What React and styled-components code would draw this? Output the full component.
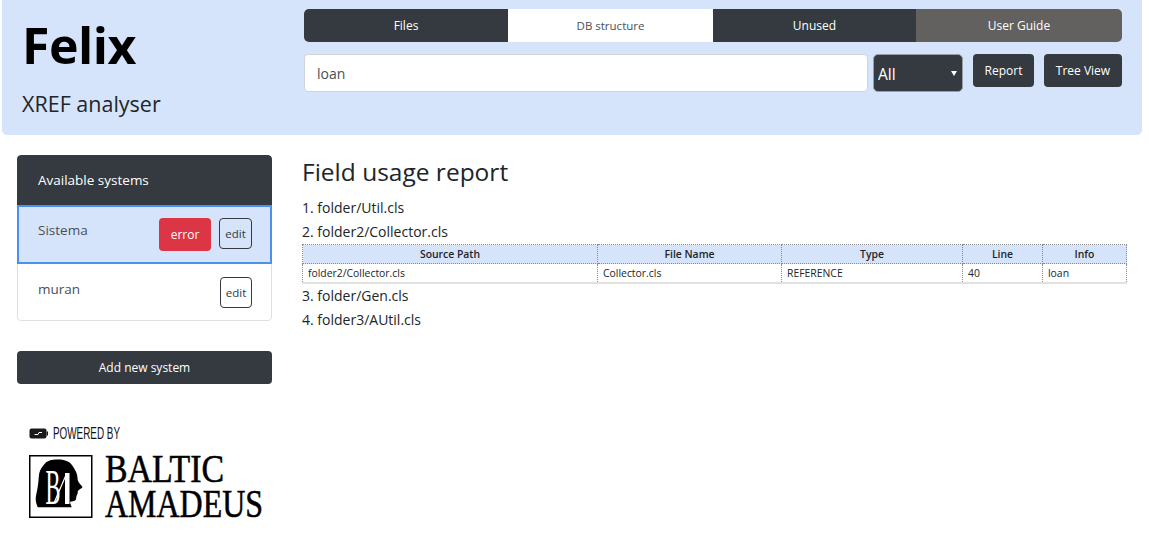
import React from 'react';
import styled, { createGlobalStyle } from 'styled-components';

const GlobalStyle = createGlobalStyle`
    html, body {
        margin: 0;
        background: #fff;
        font-family: "Open Sans", "Noto Sans", sans-serif;
        color: #212529;
    }
    * {
        box-sizing: border-box;
    }
`;

const Header = styled.header`
    display: flex;
    height: 135px;
    margin: 0 7px 0 2px;
    background: #d6e4fb;
    border-radius: 0 0 5px 5px;
`;
const Brand = styled.div`
    width: 302px;
    padding: 14px 0 0 20px;
    h1 {
        margin: 0;
        font-size: 50px;
        line-height: 62px;
        font-weight: 700;
        letter-spacing: -0.5px;
        color: #000;
    }
    p {
        margin: 14px 0 0;
        font-size: 21.5px;
        line-height: 28px;
    }
`;
const Controls = styled.div`
    width: 818px;
    padding-top: 9px;
`;
const Tabs = styled.nav`
    display: flex;
    height: 33px;
    border-radius: 5px;
    overflow: hidden;
`;
const Tab = styled.a`
    width: ${p => p.$width}px;
    display: flex;
    align-items: center;
    justify-content: center;
    font-size: 12px;
    font-weight: 500;
    color: #fff;
    background: #343a40;
    ${p => p.$active && `
        background: #fff;
        color: #495057;
        font-weight: 400;
        font-size: 11.5px;
    `}
    ${p => p.$guide && `
        background: #636060;
    `}
`;
const SearchRow = styled.div`
    display: flex;
    align-items: flex-start;
    margin-top: 12px;
`;
const SearchInput = styled.input`
    width: 564px;
    height: 38px;
    padding: 0 12px;
    border: 1px solid #ced4da;
    border-radius: 4px;
    background: #fff;
    font: 14px "Open Sans", sans-serif;
    color: #495057;
    outline: none;
`;
const SelectWrap = styled.div`
    position: relative;
    width: 90px;
    height: 38px;
    margin: 0 10px 0 5px;
    &::after {
        content: '';
        position: absolute;
        top: 17px;
        right: 6px;
        border-left: 3px solid transparent;
        border-right: 3px solid transparent;
        border-top: 5px solid #fff;
    }
`;
const KindSelect = styled.select`
    appearance: none;
    width: 100%;
    height: 100%;
    padding: 2px 0 0 4px;
    border: 1px solid #9a9ea3;
    border-radius: 5px;
    background: #343a40;
    color: #fff;
    font: 15.5px "Open Sans", sans-serif;
    outline: none;
`;
const DarkButton = styled.button`
    height: 33px;
    width: ${p => p.$width || 'auto'};
    margin-right: ${p => p.$gap || 0}px;
    padding: 0;
    border: none;
    border-radius: 4px;
    background: #343a40;
    color: #fff;
    font: 500 12px "Open Sans", sans-serif;
`;

const Page = styled.div`
    display: flex;
    padding: 20px 0 0 17px;
`;
const Sidebar = styled.aside`
    width: 255px;
    margin-right: 30px;
`;
const SystemList = styled.div`
    border-radius: 4px;
    overflow: hidden;
    margin-bottom: 30px;
`;
const SystemsHeader = styled.div`
    height: 50px;
    padding-left: 21px;
    display: flex;
    align-items: center;
    background: #343a40;
    color: #fff;
    font-size: 13.5px;
    font-weight: 500;
    border-radius: 4px 4px 0 0;
`;
const SystemRow = styled.div`
    display: flex;
    align-items: flex-start;
    justify-content: flex-end;
    height: ${p => (p.$selected ? 59 : 57)}px;
    padding: ${p => (p.$selected ? '11px 18px 0 19px' : '13px 19px 0 20px')};
    border: ${p => (p.$selected ? '2px solid #4a90f0' : '1px solid #dfdfdf')};
    ${p => !p.$selected && 'border-top: none; border-radius: 0 0 4px 4px;'}
    background: ${p => (p.$selected ? '#d6e4fb' : '#fff')};
`;
const SystemName = styled.span`
    margin-right: auto;
    padding-top: 1px;
    font-size: 13.5px;
    line-height: 22px;
    color: #495057;
`;
const ErrorBadge = styled.span`
    width: 52px;
    height: 33px;
    margin-right: 8px;
    display: flex;
    align-items: center;
    justify-content: center;
    border-radius: 4px;
    background: #dc3545;
    color: #fff;
    font-size: 12px;
`;
const EditButton = styled.button`
    width: ${p => p.$width}px;
    height: 31px;
    padding: 0;
    border: 1px solid #343a40;
    border-radius: 4px;
    background: transparent;
    color: #343a40;
    font: 11.5px "Open Sans", sans-serif;
`;
const PoweredBy = styled.div`
    margin: 41px 0 0 12px;
    svg {
        display: block;
    }
`;

const Report = styled.main`
    width: 825px;
    padding-top: 1px;
    h2 {
        margin: 0 0 8px;
        font-size: 24.5px;
        line-height: 32px;
        font-weight: 400;
    }
`;
const FileLine = styled.div`
    height: 24px;
    font-size: 14px;
    line-height: 24px;
`;
const UsageTable = styled.table`
    width: 824px;
    table-layout: fixed;
    border-collapse: collapse;
    font-size: 10.4px;
    border-bottom: 2px solid #e2e2e2;
    th, td {
        height: 19px;
        padding: 0 5px;
        border: 1px dotted #8a8a8a;
    }
    tbody td {
        border-bottom: none;
    }
    th {
        background: #d6e4fb;
        font-weight: 600;
        color: #212529;
        text-align: center;
    }
`;

const columns = [
    { name: 'Source Path', width: 295 },
    { name: 'File Name', width: 184 },
    { name: 'Type', width: 181 },
    { name: 'Line', width: 80 },
    { name: 'Info', width: 84 },
];

const Logo = () => (
    <svg width="240" height="94" viewBox="0 0 240 94">
        <rect x="0.5" y="3.5" width="17" height="10" rx="2" fill="#1a1a1a" />
        <rect x="17.5" y="6.5" width="1.5" height="4" fill="#1a1a1a" />
        <path d="M5.5 9.5h3.5l1-2h3" stroke="#fff" strokeWidth="1" fill="none" />
        <text x="24" y="14" fontFamily="Liberation Sans, sans-serif" fontSize="17" textLength="67" lengthAdjust="spacingAndGlyphs" fill="#111">POWERED BY</text>
        <rect x="0.75" y="30.75" width="62" height="61.5" fill="#fff" stroke="#000" strokeWidth="1.5" />
        <path d="M29 34.5 C22 34.5 18 36 16 38.5 C12 43 10.5 46 10 50 C9.5 54 9.5 58 8.7 62 C8 67 6.5 71 6.7 75 C7 78 8 80.5 8.7 82.3 L42.7 82.3 C42 80 41 78.5 41 76.7 C43 76.5 45.5 76.5 46.7 75 C47.5 73 47 71 48.7 68.3 C48.5 66.5 49 65.5 50.5 64.5 C52 63.5 54 62.5 53.3 61.7 C52 60 49.5 58 48.7 55 C48.5 51 48 48 46 45 C44 41 42 38 39.3 36.7 C36 35 33 34.5 29 34.5 Z" fill="#000" />
        <text x="16.5" y="79" fontFamily="Liberation Serif, serif" fontSize="50" textLength="15" lengthAdjust="spacingAndGlyphs" fill="#fff">B</text>
        <path d="M25 78 L37 50" stroke="#fff" strokeWidth="1.2" fill="none" />
        <rect x="36" y="48" width="4.5" height="31" fill="#fff" />
        <text x="76" y="57" fontFamily="Liberation Serif, serif" fontSize="41" textLength="119" lengthAdjust="spacingAndGlyphs" fill="#000" stroke="#000" strokeWidth="0.6">BALTIC</text>
        <text x="76" y="92" fontFamily="Liberation Serif, serif" fontSize="41" textLength="158" lengthAdjust="spacingAndGlyphs" fill="#000" stroke="#000" strokeWidth="0.6">AMADEUS</text>
    </svg>
);

const App = () => {
    return (
        <>
            <GlobalStyle />
            <Header>
                <Brand>
                    <h1>Felix</h1>
                    <p>XREF analyser</p>
                </Brand>
                <Controls>
                    <Tabs>
                        <Tab $width={204}>Files</Tab>
                        <Tab $width={205} $active>DB structure</Tab>
                        <Tab $width={203}>Unused</Tab>
                        <Tab $width={206} $guide>User Guide</Tab>
                    </Tabs>
                    <SearchRow>
                        <SearchInput defaultValue="loan" />
                        <SelectWrap>
                            <KindSelect defaultValue="All">
                                <option>All</option>
                            </KindSelect>
                        </SelectWrap>
                        <DarkButton $width="61px" $gap={10}>Report</DarkButton>
                        <DarkButton $width="78px">Tree View</DarkButton>
                    </SearchRow>
                </Controls>
            </Header>
            <Page>
                <Sidebar>
                    <SystemList>
                        <SystemsHeader>Available systems</SystemsHeader>
                        <SystemRow $selected>
                            <SystemName>Sistema</SystemName>
                            <ErrorBadge>error</ErrorBadge>
                            <EditButton $width={33}>edit</EditButton>
                        </SystemRow>
                        <SystemRow>
                            <SystemName>muran</SystemName>
                            <EditButton $width={32}>edit</EditButton>
                        </SystemRow>
                    </SystemList>
                    <DarkButton $width="100%">Add new system</DarkButton>
                    <PoweredBy>
                        <Logo />
                    </PoweredBy>
                </Sidebar>
                <Report>
                    <h2>Field usage report</h2>
                    <FileLine>1. folder/Util.cls</FileLine>
                    <FileLine>2. folder2/Collector.cls</FileLine>
                    <UsageTable>
                        <colgroup>
                            {columns.map(c => <col key={c.name} width={c.width} />)}
                        </colgroup>
                        <thead>
                            <tr>{columns.map(c => <th key={c.name}>{c.name}</th>)}</tr>
                        </thead>
                        <tbody>
                            <tr>
                                <td>folder2/Collector.cls</td>
                                <td>Collector.cls</td>
                                <td>REFERENCE</td>
                                <td>40</td>
                                <td>loan</td>
                            </tr>
                        </tbody>
                    </UsageTable>
                    <FileLine>3. folder/Gen.cls</FileLine>
                    <FileLine>4. folder3/AUtil.cls</FileLine>
                </Report>
            </Page>
        </>
    );
};

export default App;
